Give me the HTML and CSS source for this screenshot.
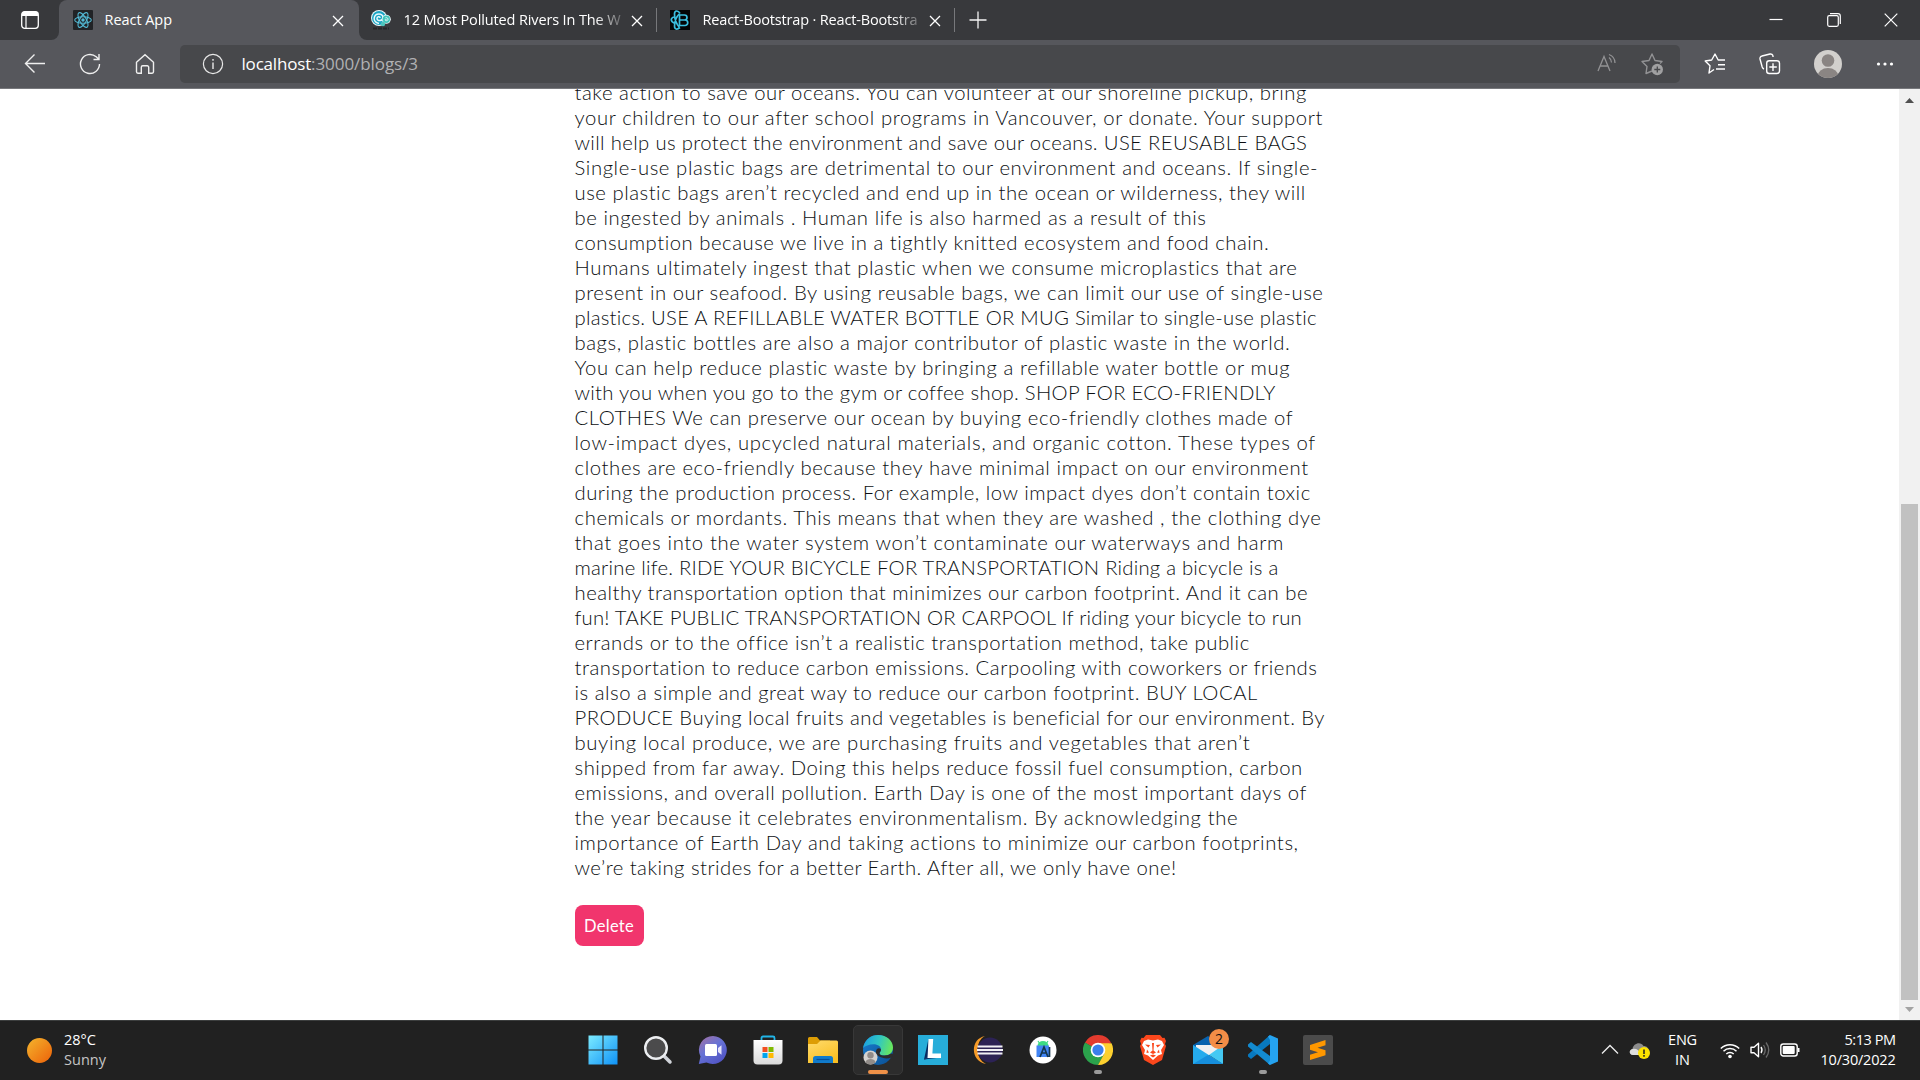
FILE: index.html
```html
<!DOCTYPE html>
<html lang="en">
<head>
<meta charset="utf-8">
<title>React App</title>
<link rel="stylesheet" href="styles.css">
</head>
<body>
<div class="screen">
  <header class="tabs">
    <div class="tab-menu"><svg width="20" height="20" viewBox="0 0 20 20"><rect x="1.7" y="1.7" width="16.6" height="16.6" rx="3" fill="none" stroke="#fff" stroke-width="1.3"/><path d="M2 6V4a2.5 2.5 0 0 1 2.500-2.500h11a2.500 2.500 0 0 1 2.500 2.500v2z" fill="#fff"/><path d="M6 5v13" stroke="#fff" stroke-width="1.2"/></svg></div>
    <div class="tab active">
      <svg width="20" height="20" viewBox="0 0 20 20"><rect width="20" height="20" rx="1" fill="#212326"/><g fill="none" stroke="#53b9d4" stroke-width="1.1"><ellipse cx="10" cy="10" rx="8.300" ry="3.300"/><ellipse cx="10" cy="10" rx="8.300" ry="3.300" transform="rotate(60 10 10)"/><ellipse cx="10" cy="10" rx="8.300" ry="3.300" transform="rotate(120 10 10)"/></g><circle cx="10" cy="10" r="1.700" fill="#53b9d4"/></svg>
      <div class="title"><span data-w="67.500">React App</span></div>
      <svg class="close" width="12" height="12" viewBox="0 0 12 12"><path d="M1 1l10 10M11 1L1 11" stroke="#fff" stroke-width="1.300"/></svg>
    </div>
    <div class="tab">
      <svg width="20" height="20" viewBox="0 0 20 20"><circle cx="8" cy="8" r="8" fill="#e9f8fb"/><circle cx="8" cy="8" r="7" fill="#1ba5c4"/><path d="M9 8c0-2-3-1.500-3 .5 0 3 6 3 6-1.200C12 3 4 2.500 3.200 8c-.4 3 2 5 4.800 5.400" fill="none" stroke="#e9f8fb" stroke-width="1.500"/><circle cx="15.300" cy="9.300" r="4.500" fill="#e9f8fb"/><circle cx="15.300" cy="9.300" r="3.700" fill="#42c6bb"/><path d="M15.500 9.500c-1-1-2 .8-.5 1.200 3 .3 2.500-3.700-.5-3" fill="none" stroke="#e9f8fb" stroke-width=".9"/><circle cx="12" cy="14" r="2.200" fill="#4dc5bd"/><path d="M2 18.500h16" stroke="#252629" stroke-width="1.800" stroke-dasharray="4 1"/></svg>
      <div class="title fade"><span data-w="217">12 Most Polluted Rivers In The W</span></div>
      <svg class="close" width="12" height="12" viewBox="0 0 12 12"><path d="M1 1l10 10M11 1L1 11" stroke="#fff" stroke-width="1.300"/></svg>
    </div>
    <div class="tab">
      <svg width="20" height="20" viewBox="0 0 20 20"><rect width="20" height="20" fill="#040607"/><g fill="none" stroke="#3bbfdf" stroke-width="1.700"><path d="M9.500 5h5a2.400 2.400 0 0 1 0 5h-5zm0 5h5.500a2.600 2.600 0 0 1 0 5.500H9.500z"/><path d="M10 3C7 0 4.500.5 4.500 4c0 5 2 10 5 13.500M10 17.500c-3 2.500-5.500 2-5.500-1.500C4.500 12 6 7 10 3M5 6.500c-5 1.500-5 5 0 7"/></g></svg>
      <div class="title fade"><span data-w="215">React-Bootstrap · React-Bootstra</span></div>
      <svg class="close" width="12" height="12" viewBox="0 0 12 12"><path d="M1 1l10 10M11 1L1 11" stroke="#fff" stroke-width="1.300"/></svg>
    </div>
    <svg class="new-tab" width="18" height="18" viewBox="0 0 18 18"><path d="M9 .5v17M.5 9h17" stroke="#f4f4f4" stroke-width="1.300"/></svg>
    <div class="window-controls">
      <svg width="14" height="14" viewBox="0 0 14 14"><path d="M.5 6.500h13" stroke="#fff" stroke-width="1.200"/></svg>
      <svg width="14" height="14" viewBox="0 0 14 14"><g fill="none" stroke="#fff" stroke-width="1.200"><rect x=".7" y="2.700" width="10.600" height="10.600" rx="1.500"/><path d="M3 .7h8a2.300 2.300 0 0 1 2.300 2.300v8"/></g></svg>
      <svg width="14" height="14" viewBox="0 0 14 14"><path d="M.7.700l12.600 12.600M13.300.700L.7 13.300" stroke="#fff" stroke-width="1.200"/></svg>
    </div>
  </header>

  <nav class="toolbar">
    <div class="nav-buttons">
      <svg width="22" height="22" viewBox="0 0 22 22"><path d="M21 10.500H1.500M10.500 1.500l-9 9 9 9" fill="none" stroke="#efefef" stroke-width="1.400"/></svg>
      <svg width="22" height="22" viewBox="0 0 22 22"><path d="M20.500 11a9.500 9.500 0 1 1-3.300-7.200l2.600 2.500M20 1v5.500h-5.500" fill="none" stroke="#efefef" stroke-width="1.400"/></svg>
      <svg width="22" height="22" viewBox="0 0 22 22"><path d="M2.500 9.300L11 1.700l8.500 7.600v9.500a1.400 1.400 0 0 1-1.400 1.400h-3.400v-6a1.500 1.500 0 0 0-1.500-1.500H8.800a1.500 1.500 0 0 0-1.500 1.500v6H3.900a1.400 1.400 0 0 1-1.400-1.400z" fill="none" stroke="#efefef" stroke-width="1.400"/></svg>
    </div>
    <div class="address">
      <svg width="22" height="22" viewBox="0 0 22 22"><circle cx="11" cy="11" r="9.600" fill="none" stroke="#e8e8e8" stroke-width="1.200"/><path d="M11 9.500v6.500M11 6v1.800" stroke="#e8e8e8" stroke-width="1.400"/></svg>
      <div class="url"><span data-w="69.500">localhost</span><span class="path" data-w="107">:3000/blogs/3</span></div>
      <svg class="read" width="22" height="22" viewBox="0 0 22 22"><g fill="none" stroke="#929294" stroke-width="1.300"><path d="M2 18L8 3.500 14 18M4.200 13h7.600M13 4.500c2 1.500 2.500 3 2.500 5M13 1.500c4 1.500 6 4.500 6 8.500"/></g></svg>
      <svg width="24" height="24" viewBox="0 0 24 24"><path d="M12 19l-6 2.500 1-7L2 9.500l7-1 3-6.500 3 6.500 7 1-2 2" fill="none" stroke="#929294" stroke-width="1.400" stroke-linejoin="round"/><circle cx="17.300" cy="17.500" r="5.700" fill="#a0a0a1"/><path d="M17.300 14.500v6M14.300 17.500h6" stroke="#47484b" stroke-width="1.300"/></svg>
    </div>
    <div class="actions">
      <svg width="22" height="22" viewBox="0 0 22 22"><path d="M10 16.500l-5 3.500 1-7.200L1.200 8l6.500-1L11 1l3.200 6H21M14 11.800h7M12 16h9" fill="none" stroke="#fff" stroke-width="1.400" stroke-linejoin="round"/></svg>
      <svg width="22" height="22" viewBox="0 0 22 22"><path d="M5 16c-1-.3-1.500-1-1.800-2L1 6a2.500 2.500 0 0 1 2-3l8-2a2.500 2.500 0 0 1 3 2v1" fill="none" stroke="#fff" stroke-width="1.400"/><rect x="7.700" y="7.700" width="12.800" height="12.800" rx="2.500" fill="none" stroke="#fff" stroke-width="1.400"/><path d="M14 10.300v7.600M10.300 14h7.500" stroke="#fff" stroke-width="1.400"/></svg>
      <svg width="28" height="28" viewBox="0 0 28 28"><clipPath id="face"><circle cx="14" cy="14" r="14"/></clipPath><g clip-path="url(#face)"><rect width="28" height="28" fill="#d2d0cd"/><circle cx="14" cy="10.500" r="6.300" fill="#8a8583"/><ellipse cx="14" cy="26.500" rx="10.500" ry="8.500" fill="#8a8583"/></g></svg>
      <svg width="18" height="18" viewBox="0 0 18 18"><g fill="#fff"><circle cx="2.500" cy="9" r="1.600"/><circle cx="9" cy="9" r="1.600"/><circle cx="15.500" cy="9" r="1.600"/></g></svg>
    </div>
  </nav>

  <main class="viewport">
    <article class="blog">
      <div class="body">
        <p><span data-w="732.700">take action to save our oceans. You can volunteer at our shoreline pickup, bring</span></p>
        <p><span data-w="748">your children to our after school programs in Vancouver, or donate. Your support</span></p>
        <p><span data-w="732.700">will help us protect the environment and save our oceans. USE REUSABLE BAGS</span></p>
        <p><span data-w="744">Single-use plastic bags are detrimental to our environment and oceans. If single-</span></p>
        <p><span data-w="731.700">use plastic bags aren’t recycled and end up in the ocean or wilderness, they will</span></p>
        <p><span data-w="632">be ingested by animals . Human life is also harmed as a result of this</span></p>
        <p><span data-w="695">consumption because we live in a tightly knitted ecosystem and food chain.</span></p>
        <p><span data-w="724">Humans ultimately ingest that plastic when we consume microplastics that are</span></p>
        <p><span data-w="749">present in our seafood. By using reusable bags, we can limit our use of single-use</span></p>
        <p><span data-w="743">plastics. USE A REFILLABLE WATER BOTTLE OR MUG Similar to single-use plastic</span></p>
        <p><span data-w="716">bags, plastic bottles are also a major contributor of plastic waste in the world.</span></p>
        <p><span data-w="715">You can help reduce plastic waste by bringing a refillable water bottle or mug</span></p>
        <p><span data-w="700.400">with you when you go to the gym or coffee shop. SHOP FOR ECO-FRIENDLY</span></p>
        <p><span data-w="718.800">CLOTHES We can preserve our ocean by buying eco-friendly clothes made of</span></p>
        <p><span data-w="740.800">low-impact dyes, upcycled natural materials, and organic cotton. These types of</span></p>
        <p><span data-w="734.200">clothes are eco-friendly because they have minimal impact on our environment</span></p>
        <p><span data-w="736.600">during the production process. For example, low impact dyes don’t contain toxic</span></p>
        <p><span data-w="746.900">chemicals or mordants. This means that when they are washed , the clothing dye</span></p>
        <p><span data-w="709.600">that goes into the water system won’t contaminate our waterways and harm</span></p>
        <p><span data-w="704">marine life. RIDE YOUR BICYCLE FOR TRANSPORTATION Riding a bicycle is a</span></p>
        <p><span data-w="734.200">healthy transportation option that minimizes our carbon footprint. And it can be</span></p>
        <p><span data-w="727.400">fun! TAKE PUBLIC TRANSPORTATION OR CARPOOL If riding your bicycle to run</span></p>
        <p><span data-w="674.700">errands or to the office isn’t a realistic transportation method, take public</span></p>
        <p><span data-w="743.300">transportation to reduce carbon emissions. Carpooling with coworkers or friends</span></p>
        <p><span data-w="683.300">is also a simple and great way to reduce our carbon footprint. BUY LOCAL</span></p>
        <p><span data-w="750">PRODUCE Buying local fruits and vegetables is beneficial for our environment. By</span></p>
        <p><span data-w="675.900">buying local produce, we are purchasing fruits and vegetables that aren’t</span></p>
        <p><span data-w="728.600">shipped from far away. Doing this helps reduce fossil fuel consumption, carbon</span></p>
        <p><span data-w="732.800">emissions, and overall pollution. Earth Day is one of the most important days of</span></p>
        <p><span data-w="663.700">the year because it celebrates environmentalism. By acknowledging the</span></p>
        <p><span data-w="724.500">importance of Earth Day and taking actions to minimize our carbon footprints,</span></p>
        <p><span data-w="601">we’re taking strides for a better Earth. After all, we only have one!</span></p>
      </div>
      <button class="delete"><span data-w="50">Delete</span></button>
    </article>
    <div class="scrollbar">
      <svg width="21" height="21" viewBox="0 0 21 21"><path d="M6 14l4.500-5 4.500 5z" fill="#505050"/></svg>
      <div class="thumb"></div>
      <svg width="21" height="20" viewBox="0 0 21 20"><path d="M6 7l4.500 5L15 7z" fill="#a3a3a3"/></svg>
    </div>
  </main>

  <footer class="taskbar">
    <div class="weather">
      <div class="sun"></div>
      <div class="lines"><div><span data-w="32">28°C</span></div><div class="dim"><span data-w="42">Sunny</span></div></div>
    </div>
    <div class="apps">
      <div class="app"><svg width="30" height="30" viewBox="0 0 30 30"><defs><linearGradient id="win" x1="0" y1="0" x2="1" y2="1" ><stop stop-color="#7cebff"/><stop offset="1" stop-color="#0f92f7"/></linearGradient></defs><path d="M.5.500h14v14H.5zM15.500.500h14v14h-14zM.5 15.500h14v14H.5zM15.500 15.500h14v14h-14z" fill="url(#win)"/></svg></div>
      <div class="app"><svg width="30" height="30" viewBox="0 0 30 30"><path d="M20 20l7 7" stroke="#d0d3d9" stroke-width="3.500" stroke-linecap="round"/><circle cx="13" cy="13" r="10.800" fill="#4b4b4c" stroke="#eceef1" stroke-width="2.400"/></svg></div>
      <div class="app"><svg width="30" height="30" viewBox="0 0 30 30"><defs><linearGradient id="chat" x1="0" y1="0" x2=".7" y2="1"><stop stop-color="#a7709f"/><stop offset=".5" stop-color="#6672d6"/><stop offset="1" stop-color="#5154c4"/></linearGradient></defs><path d="M15 1a14 14 0 1 1-6.500 26.500L.8 29l1.700-7.500A14 14 0 0 1 15 1z" fill="url(#chat)"/><rect x="7" y="9" width="12" height="12" rx="1.500" fill="#fff"/><path d="M20 13l3.500-2.700v9.400L20 17z" fill="#e7e5fb"/></svg></div>
      <div class="app"><svg width="30" height="30" viewBox="0 0 30 30"><defs><linearGradient id="bag" x1="0" y1="0" x2="0" y2="1"><stop stop-color="#fff"/><stop offset="1" stop-color="#dadada"/></linearGradient></defs><path d="M8.500 7V3a1.500 1.500 0 0 1 1.500-1.500h10A1.500 1.500 0 0 1 21.500 3v4" fill="none" stroke="#21b5e8" stroke-width="1.800"/><path d="M.5 5h29v20.500a4 4 0 0 1-4 4h-21a4 4 0 0 1-4-4z" fill="url(#bag)"/><path d="M9.500 12h5v5h-5z" fill="#f25022"/><path d="M15.500 12h5v5h-5z" fill="#7fba00"/><path d="M9.500 18h5v5h-5z" fill="#00a4ef"/><path d="M15.500 18h5v5h-5z" fill="#ffb900"/></svg></div>
      <div class="app"><svg width="30" height="30" viewBox="0 0 30 30"><defs><linearGradient id="fold" x1="0" y1="0" x2=".6" y2="1"><stop stop-color="#ffdb6c"/><stop offset="1" stop-color="#f9bf24"/></linearGradient></defs><path d="M0 10V3.500A1.500 1.500 0 0 1 1.500 2H9l3 3.500h10V10z" fill="#dd9d05"/><path d="M0 9h9l3.500-3.500H28.500A1.500 1.500 0 0 1 30 7v21H0z" fill="url(#fold)"/><path d="M5 28v-4.500a2.500 2.500 0 0 1 2.500-2.500h15a2.500 2.500 0 0 1 2.500 2.500V28z" fill="#117bcb"/><path d="M8.500 24.500h13" stroke="#064f99" stroke-width="1.200"/></svg></div>
      <div class="app current"><svg width="30" height="30" viewBox="0 0 30 30"><defs><linearGradient id="ea" x1="0" y1=".3" x2="1" y2=".5"><stop stop-color="#1b9ee0"/><stop offset=".5" stop-color="#30c6c4"/><stop offset="1" stop-color="#6ae85a"/></linearGradient><linearGradient id="eb" x1="0" y1="0" x2="1" y2="1"><stop stop-color="#197fd1"/><stop offset="1" stop-color="#0a4f94"/></linearGradient></defs><circle cx="15" cy="15" r="15" fill="url(#eb)"/><path d="M0 13C2 4 8 0 15 0c9 0 15 6 15 12.500 0 5-3.500 8-8.500 8-3 0-5-1-5-2.300 0-1 1.500-1.500 1.500-4 0-2.500-3-5-7.500-5C6 9.200 2 11 0 13z" fill="url(#ea)"/><path d="M18 14.500c0 2-1.500 2.700-1.500 3.700 0 1.500 2 2.300 5 2.300 3 0 5-.8 6.500-2l3 1-2.500 3c-6 2.500-17-.5-15.500-6.500.5-2.500 3-4 5-1.500z" fill="#2c2c2c"/><circle cx="7.500" cy="22.500" r="7" fill="#d5d3d0"/><circle cx="7.500" cy="20.300" r="3.200" fill="#918c89"/><path d="M2.300 27.200c1.500-4.300 9-4.300 10.400 0-2.900 3-7.500 3-10.400 0z" fill="#918c89"/></svg><i class="mark wide"></i></div>
      <div class="app"><svg width="30" height="30" viewBox="0 0 30 30"><rect width="30" height="30" fill="#27add9"/><path d="M10.500 4L6 24.500l5-1z" fill="#072a60"/><path d="M6 24.500L11 19l12 3.500z" fill="#10366d"/><path d="M10.500 4h4.700l-.8 14.500H23v4.500H9.500z" fill="#fff"/></svg></div>
      <div class="app"><svg width="30" height="30" viewBox="0 0 30 30"><path d="M12 1C-3 4-3 26 13 29 2 24 2 6 12 1z" fill="#f79b28"/><circle cx="17" cy="15" r="12.500" fill="#2c2255"/><path d="M4.500 11.500h25M4 15h26M4.500 18.500h25" stroke="#f1f0f6" stroke-width="1.900"/></svg></div>
      <div class="app"><svg width="30" height="30" viewBox="0 0 30 30"><circle cx="15" cy="15" r="13.500" fill="#fff"/><path d="M9.500 11a5.500 5 0 0 1 11 0z" fill="#3ddc84"/><path d="M10 6l2 3M20 6l-2 3" stroke="#3ddc84" stroke-width="1.200"/><path d="M8.500 10.500H21V22H8.500z" fill="#4285f4"/><path d="M12 22l4-10 4 10M13.500 18h5M21.500 12v10" fill="none" stroke="#14364f" stroke-width="1.700"/></svg></div>
      <div class="app"><svg width="30" height="30" viewBox="0 0 30 30"><path d="M15 15L2 7.500A15 15 0 0 1 28 7.500z" fill="#e33b2e"/><path d="M2 7.500h26l-13 7z" fill="#e33b2e"/><path d="M15 15L2 7.500A15 15 0 0 0 15 30l6.500-11.500z" fill="#2ba24c"/><path d="M15 8.300h13.500A15 15 0 0 1 15 30l6.300-11.500z" fill="#fdd02f"/><circle cx="15" cy="15" r="7.300" fill="#fff"/><circle cx="15" cy="15" r="5.600" fill="#3b80ed"/></svg><i class="mark"></i></div>
      <div class="app"><svg width="30" height="30" viewBox="0 0 30 30"><path d="M8 0h14l2.500 3 2-.3L28 6l-1 3 1 2-4 14-9 5-9-5L2 11l1-2-1-3 1.500-3.300 2 .3z" fill="#fb471c"/><path d="M6 6l4-1.500 5 1 5-1L24 6l2 4-3 5 1 4-4 1.500-5 4.500-5-4.500L6 19l1-4-3-5z" fill="#fff"/><path d="M7 9.500l5 .5-1.500 2.500zM23 9.500l-5 .5 1.500 2.500zM14 8h2l-.5 7.500 2.500 2-3 1.500-3-1.500 2.500-2zM9 14.500l2 3-2.500.5zM21 14.500l-2 3 2.500.5zM12 20.500l3-1 3 1-3 2z" fill="#fb471c"/></svg></div>
      <div class="app"><svg width="30" height="30" viewBox="0 0 30 30"><path d="M0 10L15 1l15 9v10H0z" fill="#0862ae"/><path d="M3 10h24v10H3z" fill="#f0f0f1"/><path d="M0 10l30 19H0z" fill="#25abed"/><path d="M30 10v19L16 20z" fill="#45c9f3"/><path d="M15 20L0 29h30z" fill="#168fdd"/></svg><b class="badge">2</b></div>
      <div class="app"><svg width="30" height="30" viewBox="0 0 30 30"><path d="M22 0v9L3 24l-3-2.500v-2z" fill="#0879bf"/><path d="M22 30v-9L3 7 0 9.500v2z" fill="#138bd0"/><path d="M22 0l8 3.500v23L22 30l-2-1.500 2-3V5l-2-3.500z" fill="#25a3f0"/></svg><i class="mark"></i></div>
      <div class="app"><svg width="30" height="30" viewBox="0 0 30 30"><rect width="30" height="30" rx="2" fill="#4b4b4b"/><path d="M7 10l15.500-5v5.200l-8 2.600 8 2.500v5L7 25v-5.200l8-2.600-8-2.500z" fill="#ff9800"/></svg></div>
    </div>
    <div class="tray">
      <svg width="18" height="18" viewBox="0 0 18 18"><path d="M1 12.500l8-8 8 8" fill="none" stroke="#eee" stroke-width="1.300"/></svg>
      <svg width="22" height="20" viewBox="0 0 22 20"><path d="M4 15C0 15-.5 10 3.500 9 4 3 12 1 14.500 6c4 0 5.500 3 5 6l-4 3z" fill="#8c8c8c"/><path d="M4 15c-4 0-4.500-5-.5-6 4-1 6 1.500 8 4v2z" fill="#ddd"/><circle cx="15" cy="13" r="6" fill="#fde300"/><path d="M15 9.500v4.500M15 15v1.700" stroke="#222" stroke-width="1.500"/></svg>
      <div class="lines lang"><div><span data-w="29">ENG</span></div><div><span data-w="15">IN</span></div></div>
      <svg width="20" height="18" viewBox="0 0 20 18"><g fill="none" stroke="#fff" stroke-width="1.500"><path d="M.8 7.500a13 13 0 0 1 18.400 0M3.500 10.300a9.200 9.200 0 0 1 13 0M6.300 13a5.300 5.300 0 0 1 7.400 0"/></g><circle cx="10" cy="15.500" r="1.800" fill="#fff"/></svg>
      <svg width="20" height="18" viewBox="0 0 20 18"><path d="M1 6.300h3l4.500-4v13.400l-4.500-4H1zM11 6q2 3 0 6" fill="none" stroke="#fff" stroke-width="1.400" stroke-linejoin="round"/><path d="M13.500 4q3.500 5 0 10M16 1.500q5.500 7.500 0 15" fill="none" stroke="#6a6a6a" stroke-width="1.300"/></svg>
      <svg width="20" height="18" viewBox="0 0 20 18"><rect x=".8" y="3" width="16.400" height="12" rx="2.500" fill="none" stroke="#fff" stroke-width="1.400"/><rect x="2.700" y="5" width="12" height="8" rx="1" fill="#fff"/><path d="M18 7h1.500v4H18z" fill="#fff"/></svg>
      <div class="lines clock"><div><span data-w="51">5:13 PM</span></div><div><span data-w="75">10/30/2022</span></div></div>
    </div>
  </footer>
</div>
<script src="fit.js"></script>
</body>
</html>
```
FILE: fit.js
```js
// Tracks each label so that it fills the width given in data-w.
document.querySelectorAll('[data-w]').forEach(function (el) {
  var target = parseFloat(el.dataset.w);
  var natural = el.getBoundingClientRect().width;
  el.style.letterSpacing = (target - natural) / el.textContent.length + 'px';
});
```
FILE: styles.css
```css
* { box-sizing: border-box; }
body { margin: 0; overflow: hidden; }
svg { display: block; flex: none; }
span { white-space: nowrap; }

.screen {
  width: 1920px;
  height: 1080px;
  display: flex;
  flex-direction: column;
  font-family: "Open Sans", "Noto Sans", sans-serif;
  font-size: 14.5px;
  line-height: 20px;
  color: #fff;
  background: #fff;
}

/* Tab strip */
.tabs {
  height: 40px;
  flex: none;
  display: flex;
  align-items: center;
  background: linear-gradient(#38393c, #38393c) 955px 0 / 965px 40px no-repeat, linear-gradient(#38393c, #38393c) 50px 0 / 320px 20px no-repeat, #56575c;
}
.tab-menu { width: 59px; height: 40px; padding: 10px 0 0 20px; background: #38393c; border-bottom-right-radius: 8px; }
.tab { width: 298px; height: 40px; display: flex; align-items: center; padding: 0 14px 0 13px; background: #38393c; position: relative; }
.tab.active { width: 300px; padding: 0 15px 0 14px; background: #56575c; border-radius: 8px 8px 0 0; }
.tab:not(.active)::after { content: ""; position: absolute; right: 0; top: 8px; width: 1px; height: 24px; background: #77787b; }
.tab.active + .tab { border-bottom-left-radius: 8px; padding-left: 12px; }
.title { flex: 1; margin: 0 9px 0 11.500px; overflow: hidden; }
.title.fade { margin-left: 12.500px; margin-right: 10px; -webkit-mask-image: linear-gradient(90deg, #000 88%, transparent 104%); mask-image: linear-gradient(90deg, #000 88%, transparent 104%); }
.close { margin-top: 1px; }
.new-tab { margin-left: 14px; }
.window-controls { margin-left: auto; display: flex; gap: 43.500px; padding-right: 22px; }

/* Toolbar */
.toolbar { height: 49px; flex: none; display: flex; align-items: center; background: #56575c; border-bottom: 1px solid #77787c; }
.nav-buttons { width: 180px; display: flex; gap: 33px; padding-left: 24px; }
.address { width: 1500px; height: 38px; display: flex; align-items: center; padding: 0 16px 0 21.500px; background: #47484b; border-radius: 5px; }
.url { flex: 1; margin-left: 18px; font-size: 17px; line-height: 24px; }
.path { color: #b1b1b3; }
.read { margin-right: 22px; }
.actions { flex: 1; display: flex; align-items: center; padding-left: 24px; }
.actions svg:nth-child(2) { margin-left: 33px; }
.actions svg:nth-child(3) { margin-left: 33px; }
.actions svg:nth-child(4) { margin-left: 34px; }

/* Page */
.viewport { height: 931px; flex: none; display: flex; justify-content: space-between; overflow: hidden; }
.blog { width: 751px; margin: -9px 0 0 574.500px; font-family: Lato, sans-serif; font-weight: 300; font-size: 20.300px; line-height: 25px; color: #0c0f12; }
.blog p { margin: 0; }
.delete { display: block; height: 41px; width: 69px; margin-top: 25px; padding: 0; border: 0; border-radius: 8px; background: #f1356d; color: #fff; font: 400 16.500px/43px Lato, sans-serif; }
.scrollbar { width: 21px; display: flex; flex-direction: column; background: #f1f1f1; }
.thumb { height: 496px; width: 17px; margin: auto auto 0; background: #c1c1c1; }

/* Taskbar */
.taskbar { height: 60px; flex: none; display: flex; align-items: center; padding-bottom: 1px; background: #212121; border-top: 1px solid #3c3e3e; }
.weather { width: 575px; display: flex; align-items: center; padding-left: 27px; }
.sun { width: 25px; height: 25px; margin-right: 12px; border-radius: 50%; background: linear-gradient(135deg, #f4b52d, #ed6109); }
.lines { padding-bottom: 1px; }
.dim { color: #c5c5c5; }
.apps { display: flex; }
.app { width: 55px; height: 50px; display: grid; place-items: center; position: relative; }
.current { width: 50px; margin: 0 2.500px; background: #2c2c2c; border: 1px solid #383838; border-radius: 5px; }
.mark { position: absolute; left: 50%; bottom: 1px; width: 8px; height: 4px; margin-left: -4px; border-radius: 2px; background: #9b9b9b; }
.mark.wide { width: 20px; margin-left: -10px; bottom: 0; background: #ef9148; }
.badge { position: absolute; left: 29px; top: 4px; width: 20px; height: 20px; border-radius: 50%; background: #f28d47; color: #111; font-size: 14px; font-weight: 400; text-align: center; }
.tray { margin-left: auto; display: flex; align-items: center; padding-right: 24.500px; }
.tray svg { margin-right: 10px; }
.lang { width: 29px; margin: 0 23px 0 7px; text-align: center; }
.clock { width: 75px; margin-left: 10.500px; text-align: right; }
```
